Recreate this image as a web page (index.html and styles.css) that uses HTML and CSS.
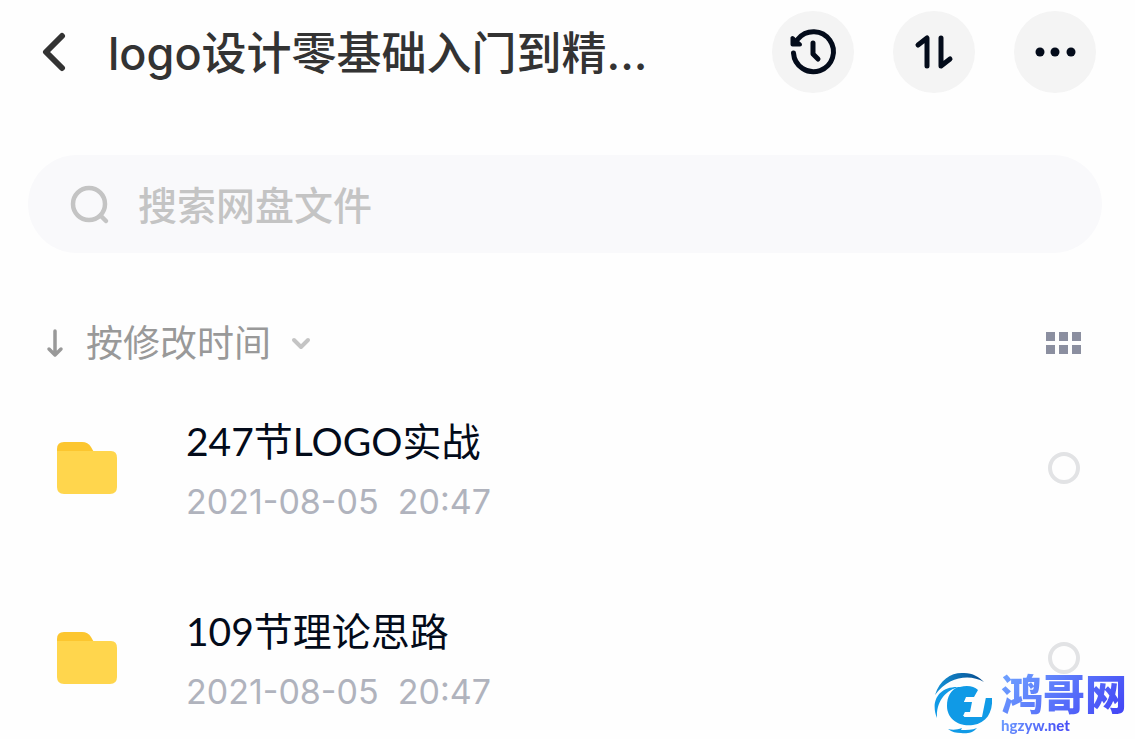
FILE: index.html
```
<!DOCTYPE html>
<html lang="zh-CN">
<head>
    <meta charset="UTF-8">
    <meta name="viewport" content="width=device-width, initial-scale=1.0">
    <title>网盘文件</title>
    <link rel="stylesheet" href="styles.css">
</head>
<body>

    <header class="header">
        <button class="back" type="button" aria-label="返回">
            <svg width="24" height="40" viewBox="0 0 24 40"><path d="M20 4 4 20l16 16" fill="none" stroke="#333" stroke-width="6" stroke-linecap="round" stroke-linejoin="round"/></svg>
        </button>
        <h1 class="title">logo设计零基础入门到精...</h1>
        <div class="actions">
            <button class="round-btn" type="button" aria-label="历史记录">
                <svg width="82" height="82" viewBox="0 0 82 82">
                    <path d="M21.500 42a20 20 0 1 0 4.500-14" fill="none" stroke="#030b1a" stroke-width="5" stroke-linecap="round"/>
                    <path d="M20.500 27V33.500H28Z" fill="#030b1a" stroke="#030b1a" stroke-width="4" stroke-linejoin="round"/>
                    <path d="M41 32v11l5 5" fill="none" stroke="#030b1a" stroke-width="5" stroke-linecap="round" stroke-linejoin="round"/>
                </svg>
            </button>
            <button class="round-btn" type="button" aria-label="排序">
                <svg width="82" height="82" viewBox="0 0 82 82"><path d="M25 34l9-7v28M48 27v28l9-7" fill="none" stroke="#030b1a" stroke-width="5" stroke-linecap="round" stroke-linejoin="round"/></svg>
            </button>
            <button class="round-btn" type="button" aria-label="更多">
                <svg width="82" height="82" viewBox="0 0 82 82" fill="#030b1a"><circle cx="26" cy="41" r="4.500"/><circle cx="41" cy="41" r="4.500"/><circle cx="57" cy="41" r="4.500"/></svg>
            </button>
        </div>
    </header>

    <label class="search">
        <svg width="40" height="40" viewBox="0 0 40 40" fill="none" stroke="#c4c4c4" stroke-width="4.500" stroke-linecap="round"><circle cx="19" cy="19" r="16"/><path d="M30.500 30.500l5.500 5.500"/></svg>
        <input type="text" placeholder="搜索网盘文件" aria-label="搜索网盘文件">
    </label>

    <div class="toolbar">
        <button class="sort" type="button">
            <svg width="18" height="30" viewBox="0 0 18 30"><path d="M9 3v23M3 21l6 6 6-6" fill="none" stroke="#999" stroke-width="3.500" stroke-linecap="round" stroke-linejoin="round"/></svg>
            <span>按修改时间</span>
            <svg width="20" height="14" viewBox="0 0 20 14"><path d="M3 4l7 7 7-7" fill="none" stroke="#c4c4c4" stroke-width="4" stroke-linecap="round" stroke-linejoin="round"/></svg>
        </button>
        <button class="grid-btn" type="button" aria-label="宫格视图">
            <svg width="36" height="22" viewBox="0 0 36 22" fill="#8b8fa0"><path d="M0 0h9v9H0zM13 0h9v9h-9zM26 0h9v9h-9zM0 13h9v9H0zM13 13h9v9h-9zM26 13h9v9h-9z"/></svg>
        </button>
    </div>

    <ul class="list">
        <li class="item">
            <svg class="folder" width="60" height="52" viewBox="0 0 60 52"><path d="M0 12V7q0-7 7-7h18q6 0 9 5l4 7z" fill="#fcc62f"/><path d="M0 9h54q6 0 6 7v29q0 7-7 7H7q-7 0-7-7z" fill="#ffd64d"/></svg>
            <div class="info">
                <label class="name" for="file1">247节LOGO实战</label>
                <time class="date">2021-08-05  20:47</time>
            </div>
            <input class="check" id="file1" type="checkbox">
        </li>
        <li class="item">
            <svg class="folder" width="60" height="52" viewBox="0 0 60 52"><path d="M0 12V7q0-7 7-7h18q6 0 9 5l4 7z" fill="#fcc62f"/><path d="M0 9h54q6 0 6 7v29q0 7-7 7H7q-7 0-7-7z" fill="#ffd64d"/></svg>
            <div class="info">
                <label class="name" for="file2">109节理论思路</label>
                <time class="date">2021-08-05  20:47</time>
            </div>
            <input class="check" id="file2" type="checkbox">
        </li>
    </ul>

    <!-- 右下角水印 -->
    <div class="watermark">
        <svg width="60" height="62" viewBox="0 0 60 62">
            <defs><linearGradient id="arc" x1="0" x2="1"><stop offset="0" stop-color="#1593d8"/><stop offset="1" stop-color="#064a8c"/></linearGradient></defs>
            <path d="M1 23C6 7 18 0 30 1c9 0 15 4 20 9C36 2 15 4 1 23z" fill="url(#arc)"/>
            <path d="M3 46C-4 29 5 14 25 15 12 18 2 29 3 46z" fill="#109ae6"/>
            <path d="M26 15c7-2 14-1 18 3l-4 7h-7l-3 5h8l-2 10h-5l-2 4c5 1 11 1 17 0l5-18h7c1 15-6 25-19 27-14 2-26-6-26-19 0-10 4-16 11-19z" fill="#109ae6"/>
            <path d="M40 25h12l-4 20H30l1-5h6l2-10h-9l2-5z" fill="#fefefe"/>
            <path d="M14 57c4 1 9 1 14-1l-1 2c6 0 11 0 16-2-4 5-11 6-16 5-5 0-9-1-13-4z" fill="#109ae6"/>
        </svg>
        <div class="mark-text">
            <span class="mark-name">鸿哥网</span>
            <span class="mark-url">hgzyw.net</span>
        </div>
    </div>

</body>
</html>
```
FILE: styles.css
```
* {
    box-sizing: border-box;
}
body {
    margin: 0;
    background: #fefefe;
    font-family: Lato, "Noto Sans CJK SC", sans-serif;
    color: #030b1a;
}
button {
    padding: 0;
    border: none;
    background: none;
    font: inherit;
    cursor: pointer;
}
svg {
    display: block;
    flex: none;
}
.header {
    display: flex;
    align-items: center;
    height: 103px;
    padding: 0 39px 0 42px;
}
.title {
    flex: 1;
    margin: 0 0 0 42px;
    padding-top: 4px;
    font-family: Inter, "Noto Sans CJK SC", sans-serif;
    font-size: 45px;
    font-weight: 500;
    line-height: 60px;
    color: #333;
    white-space: nowrap;
}
.actions {
    display: flex;
    gap: 39px;
}
.round-btn {
    width: 82px;
    height: 82px;
    border-radius: 50%;
    background: #f4f4f4;
}
.search {
    display: flex;
    align-items: center;
    gap: 28px;
    height: 98px;
    margin: 52px 33px 0 28px;
    padding: 2px 42px 0;
    border-radius: 49px;
    background: #f9f9fb;
}
.search input {
    flex: 1;
    min-width: 0;
    padding: 0;
    border: none;
    outline: none;
    background: none;
    font: inherit;
    font-size: 39px;
    font-weight: 500;
    line-height: 60px;
}
.search input::placeholder {
    color: #c4c4c4;
    opacity: 1;
}
.toolbar {
    display: flex;
    align-items: center;
    justify-content: space-between;
    height: 60px;
    margin-top: 60px;
    padding: 0 53px 0 46px;
}
.sort {
    display: flex;
    align-items: center;
    font-size: 37px;
    line-height: 60px;
    color: #999;
}
.sort span {
    margin: 0 20px 0 22px;
}
/* 文件列表 */
.list {
    display: grid;
    gap: 64px;
    margin: 32px 0 0;
    padding: 0 55px 0 57px;
    list-style: none;
}
.item {
    display: flex;
    align-items: center;
}
.info {
    flex: 1;
    margin-left: 69px;
    padding-top: 4px;
}
.name {
    display: block;
    font-size: 39px;
    line-height: 64px;
}
.date {
    display: block;
    font-family: Inter, sans-serif;
    font-size: 34px;
    line-height: 58px;
    color: #b0b3bd;
    white-space: pre;
}
.check {
    appearance: none;
    width: 32px;
    height: 32px;
    margin: 0;
    border: 4px solid #e2e3e5;
    border-radius: 50%;
}
.check:checked {
    background: #ffd64d;
}
/* 水印 */
.watermark {
    position: fixed;
    right: 8px;
    bottom: 5px;
    display: flex;
    align-items: center;
    gap: 7px;
}
.mark-text {
    display: grid;
}
.mark-name,
.mark-url {
    background: linear-gradient(135deg, #70a4ff, #4141f5);
    background-clip: text;
    -webkit-background-clip: text;
    color: transparent;
}
.mark-name {
    font-size: 42px;
    font-weight: 900;
    line-height: 44px;
}
.mark-url {
    justify-self: start;
    font-size: 15px;
    font-weight: 900;
    line-height: 18px;
}
```
